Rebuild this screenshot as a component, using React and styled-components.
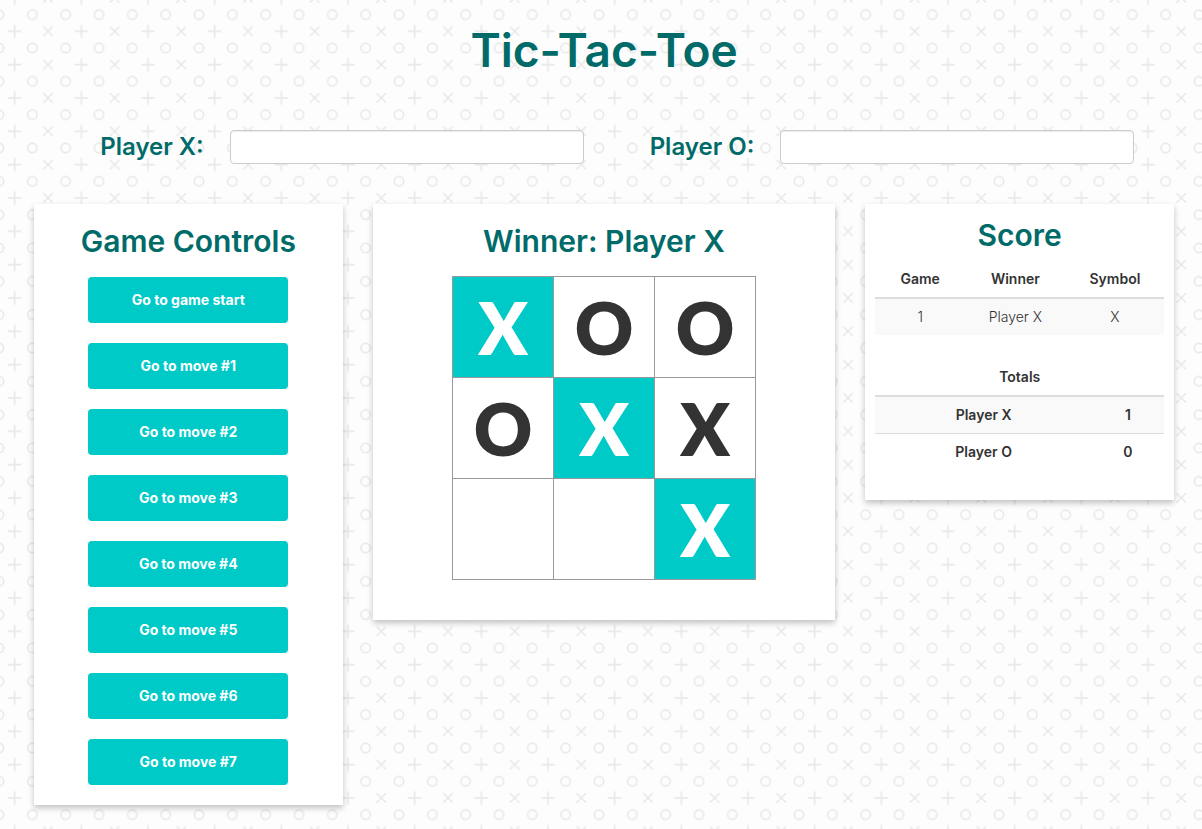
import React, { useId } from "react";
import styled, { createGlobalStyle } from "styled-components";

const teal = "#006b68";
const aqua = "#00cac8";

const patternSvg = `
<svg xmlns="http://www.w3.org/2000/svg" width="200" height="200" viewBox="0 0 600 600">
  <defs>
    <pattern id="p" width="200" height="100" patternUnits="userSpaceOnUse">
      <g fill="none" stroke="#e9e9e9" stroke-width="5">
        <circle cx="97" cy="44" r="14"/>
        <circle cx="197" cy="44" r="14"/>
        <circle cx="-3" cy="44" r="14"/>
        <path d="M24 94H64M44 74V100M44 -6V14M130 80L150 100M158 80L138 100M150 0L158 8M138 0L130 8"/>
      </g>
    </pattern>
  </defs>
  <rect width="600" height="600" fill="#fdfdfd"/>
  <rect width="600" height="600" fill="url(#p)"/>
</svg>`;

const GlobalStyle = createGlobalStyle`
  *, *::before, *::after { box-sizing: border-box; }
  body {
    margin: 0;
    color: #333;
    font: 14px/20px "Century Gothic", Inter, "Liberation Sans", sans-serif;
    background: #fdfdfd url("data:image/svg+xml,${encodeURIComponent(patternSvg)}");
  }
`;

const Page = styled.main`
  padding: 20px 28px 24px 34px;
`;

const Title = styled.h1`
  margin: 0 0 50px;
  color: ${teal};
  font-size: 46px;
  line-height: 60px;
  font-weight: 600;
  text-align: center;
`;

const Players = styled.form`
  display: grid;
  grid-template-columns: 1fr 1fr;
  padding-right: 40px;
  margin-bottom: 40px;
`;

const PlayerField = styled.div`
  display: flex;
  align-items: center;
  padding-left: 40px;
`;

const PlayerLabel = styled.label`
  flex: 0 0 156px;
  color: ${teal};
  font-size: 24px;
  line-height: 32px;
  font-weight: 600;
  text-align: center;
`;

const PlayerInput = styled.input`
  flex: 1;
  min-width: 0;
  height: 34px;
  padding: 6px 12px;
  border: 1px solid #ccc;
  border-radius: 4px;
  background: #fff;
  color: #555;
  font: inherit;
  box-shadow: inset 0 1px 1px rgba(0, 0, 0, 0.075);
`;

const Columns = styled.div`
  display: grid;
  grid-template-columns: 2fr 3fr 2fr;
  gap: 30px;
  align-items: start;
`;

const Card = styled.section`
  display: flex;
  flex-direction: column;
  align-items: center;
  padding: ${(p) => p.$padding};
  background: #fff;
  box-shadow: 0 3px 6px rgba(0, 0, 0, 0.24);
`;

const Heading = styled.h2`
  margin: 0 0 ${(p) => p.$gap};
  color: ${teal};
  font-size: 30px;
  line-height: 34px;
  font-weight: 600;
  text-align: center;
  white-space: nowrap;
`;

const Moves = styled.div`
  display: flex;
  flex-direction: column;
  gap: 20px;
  width: 200px;
`;

const MoveButton = styled.button`
  height: 46px;
  border: 0;
  border-radius: 4px;
  background: ${aqua};
  color: #fff;
  font: inherit;
  font-weight: 700;
  cursor: pointer;
`;

const Board = styled.div`
  display: grid;
  grid-template-columns: repeat(3, 100px);
  grid-auto-rows: 100px;
  gap: 1px;
  padding: 1px;
  background: #999;
`;

const Square = styled.button`
  padding: 0;
  border: 0;
  background: ${(p) => (p.$won ? aqua : "#fff")};
  color: ${(p) => (p.$won ? "#fff" : "#333")};
  font: 800 72px/100px "Century Gothic", Lato, sans-serif;
  cursor: pointer;
`;

const ScoreTable = styled.table`
  width: 100%;
  margin-bottom: 24px;
  table-layout: fixed;
  border-collapse: collapse;
  text-align: center;

  th, td { padding: 8px; }
  thead th { border-bottom: 2px solid #ddd; }
  tbody tr + tr > * { border-top: 1px solid #ddd; }
  tbody tr:nth-child(odd) { background: #f9f9f9; }
  td { font-weight: 300; }
  th, tbody td.total { font-weight: 600; }
`;

const Column = styled.col`
  width: ${(p) => p.$width};
`;

function Player({ symbol }) {
  const id = useId();
  return (
    <PlayerField>
      <PlayerLabel htmlFor={id}>Player {symbol}:</PlayerLabel>
      <PlayerInput id={id} type="text" />
    </PlayerField>
  );
}

const squares = ["X", "O", "O", "O", "X", "X", "", "", "X"];
const winningLine = [0, 4, 8];
const moves = [1, 2, 3, 4, 5, 6, 7];

export default function App() {
  return (
    <>
      <GlobalStyle />
      <Page>
        <Title>Tic-Tac-Toe</Title>
        <Players>
          <Player symbol="X" />
          <Player symbol="O" />
        </Players>
        <Columns>
          <Card $padding="20px 10px">
            <Heading $gap="19px">Game Controls</Heading>
            <Moves>
              <MoveButton type="button">Go to game start</MoveButton>
              {moves.map((n) => (
                <MoveButton type="button" key={n}>Go to move #{n}</MoveButton>
              ))}
            </Moves>
          </Card>
          <Card $padding="20px 10px 40px">
            <Heading $gap="18px">Winner: Player X</Heading>
            <Board>
              {squares.map((mark, i) => (
                <Square
                  type="button"
                  key={i}
                  aria-label={`Square ${i + 1} ${mark}`}
                  $won={winningLine.includes(i)}
                >
                  {mark}
                </Square>
              ))}
            </Board>
          </Card>
          <Card $padding="14px 10px 6px">
            <Heading $gap="9px">Score</Heading>
            <ScoreTable>
              <colgroup>
                <Column $width="31%" />
                <Column $width="35%" />
                <Column $width="34%" />
              </colgroup>
              <thead>
                <tr>
                  <th scope="col">Game</th>
                  <th scope="col">Winner</th>
                  <th scope="col">Symbol</th>
                </tr>
              </thead>
              <tbody>
                <tr>
                  <td>1</td>
                  <td>Player X</td>
                  <td>X</td>
                </tr>
              </tbody>
            </ScoreTable>
            <ScoreTable>
              <colgroup>
                <Column $width="75%" />
                <Column $width="25%" />
              </colgroup>
              <thead>
                <tr>
                  <th colSpan={2}>Totals</th>
                </tr>
              </thead>
              <tbody>
                <tr>
                  <th scope="row">Player X</th>
                  <td className="total">1</td>
                </tr>
                <tr>
                  <th scope="row">Player O</th>
                  <td className="total">0</td>
                </tr>
              </tbody>
            </ScoreTable>
          </Card>
        </Columns>
      </Page>
    </>
  );
}
